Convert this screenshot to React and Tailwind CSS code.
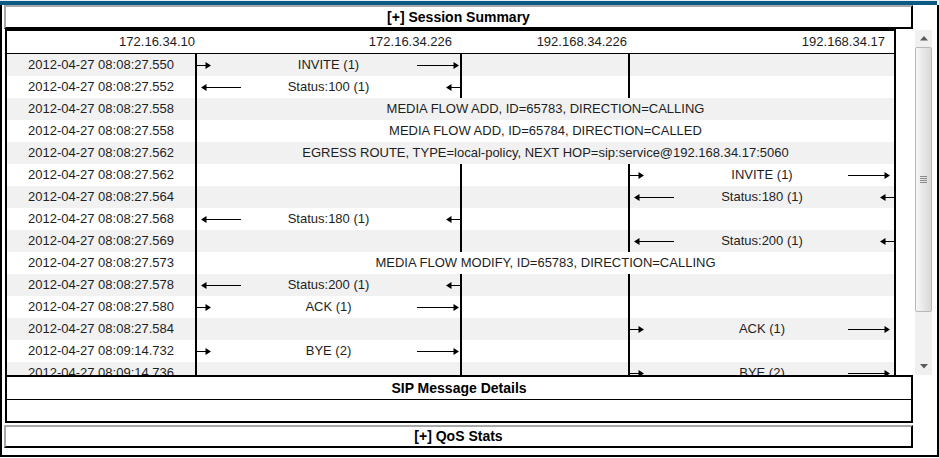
import React from 'react'

const rows = [
  { t: '2012-04-27 08:08:27.550', col: 'a', dir: 'r', label: 'INVITE (1)' },
  { t: '2012-04-27 08:08:27.552', col: 'a', dir: 'l', label: 'Status:100 (1)' },
  { t: '2012-04-27 08:08:27.558', span: 'MEDIA FLOW ADD, ID=65783, DIRECTION=CALLING' },
  { t: '2012-04-27 08:08:27.558', span: 'MEDIA FLOW ADD, ID=65784, DIRECTION=CALLED' },
  { t: '2012-04-27 08:08:27.562', span: 'EGRESS ROUTE, TYPE=local-policy, NEXT HOP=sip:service@192.168.34.17:5060' },
  { t: '2012-04-27 08:08:27.562', col: 'c', dir: 'r', label: 'INVITE (1)' },
  { t: '2012-04-27 08:08:27.564', col: 'c', dir: 'l', label: 'Status:180 (1)' },
  { t: '2012-04-27 08:08:27.568', col: 'a', dir: 'l', label: 'Status:180 (1)' },
  { t: '2012-04-27 08:08:27.569', col: 'c', dir: 'l', label: 'Status:200 (1)' },
  { t: '2012-04-27 08:08:27.573', span: 'MEDIA FLOW MODIFY, ID=65783, DIRECTION=CALLING' },
  { t: '2012-04-27 08:08:27.578', col: 'a', dir: 'l', label: 'Status:200 (1)' },
  { t: '2012-04-27 08:08:27.580', col: 'a', dir: 'r', label: 'ACK (1)' },
  { t: '2012-04-27 08:08:27.584', col: 'c', dir: 'r', label: 'ACK (1)' },
  { t: '2012-04-27 08:09:14.732', col: 'a', dir: 'r', label: 'BYE (2)' },
  { t: '2012-04-27 08:09:14.736', col: 'c', dir: 'r', label: 'BYE (2)' },
]

// arrow pieces, like the old ladder images
const RightStub = () => (
  <svg width="14" height="9" className="block">
    <rect x="0" y="4" width="10" height="1" fill="#000" />
    <polygon points="8.5,1 14,4.5 8.5,8" fill="#000" />
  </svg>
)

const RightLong = () => (
  <svg width="42" height="9" className="block">
    <rect x="0" y="4" width="38" height="1" fill="#000" />
    <polygon points="36.5,1 42,4.5 36.5,8" fill="#000" />
  </svg>
)

const LeftLong = () => (
  <svg width="40" height="9" className="block ml-[4px]">
    <polygon points="5.5,1 0,4.5 5.5,8" fill="#000" />
    <rect x="4" y="4" width="36" height="1" fill="#000" />
  </svg>
)

const LeftStub = () => (
  <svg width="14" height="9" className="block">
    <polygon points="5.5,1 0,4.5 5.5,8" fill="#000" />
    <rect x="4" y="4" width="10" height="1" fill="#000" />
  </svg>
)

const ArrowCell = ({ dir, label, endPad }) => (
  <div className="flex h-full items-center">
    <div className="flex w-[48px]">{dir === 'r' ? <RightStub /> : <LeftLong />}</div>
    <div className="flex-1 text-center whitespace-nowrap">{label}</div>
    <div className={`flex w-[48px] justify-end ${dir === 'r' ? endPad : ''}`}>
      {dir === 'r' ? <RightLong /> : <LeftStub />}
    </div>
  </div>
)

const Line = () => <div className="w-[2px] self-stretch bg-black" />

const Row = ({ row, i }) => (
  <div className={`flex h-[22px] items-center ${i % 2 === 0 ? 'bg-[#f1f1f1]' : 'bg-white'}`}>
    <div className="w-[188px] text-center whitespace-nowrap">{row.t}</div>
    <Line />
    {row.span ? (
      <div className="flex-1 text-center whitespace-nowrap">{row.span}</div>
    ) : (
      <>
        <div className="h-full w-[263px]">
          {row.col === 'a' && <ArrowCell dir={row.dir} label={row.label} endPad="pr-[1px]" />}
        </div>
        <Line />
        <div className="h-full w-[166px]" />
        <Line />
        <div className="h-full flex-1">
          {row.col === 'c' && <ArrowCell dir={row.dir} label={row.label} endPad="pr-[4px]" />}
        </div>
      </>
    )}
  </div>
)

const Triangle = ({ down }) => (
  <svg width="8" height="5" className="block">
    <polygon points={down ? '0,0 8,0 4,4.5' : '4,0 8,4.5 0,4.5'} fill="#5a5a5a" />
  </svg>
)

const Scrollbar = () => (
  <div className="ml-[19px] mt-[1px] flex h-[345px] w-[17px] flex-col bg-[#f0f0f0]">
    <div className="flex h-[17px] items-center justify-center">
      <Triangle />
    </div>
    <div className="flex h-[265px] items-center justify-center rounded-[2px] border border-[#b8b8b8] bg-gradient-to-r from-[#f7f7f7] to-[#d8d8d8]">
      <div className="flex flex-col gap-[1px]">
        <div className="h-[1px] w-[7px] bg-[#8a8a8a]" />
        <div className="h-[1px] w-[7px] bg-[#8a8a8a]" />
        <div className="h-[1px] w-[7px] bg-[#8a8a8a]" />
        <div className="h-[1px] w-[7px] bg-[#8a8a8a]" />
      </div>
    </div>
    <div className="flex-1" />
    <div className="flex h-[17px] items-center justify-center">
      <Triangle down />
    </div>
  </div>
)

export default function App() {
  return (
    <div className="flex h-[458px] w-[939px] flex-col bg-white font-['Liberation_Sans',Arial,sans-serif] text-[13px] text-[#1e1e1e]">
      <div className="h-[1px] bg-[#e6edf2]" />
      <div className="mr-[2px] h-[4px] bg-[#0b5a86]" />
      <div className="flex h-[452px] flex-col border-x-2 border-b-2 border-black">
        <div className="ml-[2px] flex h-[24px] w-[909px] items-center justify-center border-2 border-t-[#a8a8a8] border-l-[#a8a8a8] border-r-black border-b-black text-[14px] font-bold text-black">
          [+] Session Summary
        </div>

        <div className="flex h-[346px]">
          <div className="ml-[3px] h-[346px] w-[891px] overflow-hidden border-x-2 border-t-2 border-black">
            <div className="flex h-[23px] items-center border-b border-black text-right whitespace-nowrap">
              <div className="w-[190px] pr-[2px]">172.16.34.10</div>
              <div className="w-[265px] pr-[10px]">172.16.34.226</div>
              <div className="w-[168px] pr-[3px]">192.168.34.226</div>
              <div className="w-[264px] pr-[9px]">192.168.34.17</div>
            </div>
            {rows.map((row, i) => (
              <Row key={i} row={row} i={i} />
            ))}
          </div>
          <Scrollbar />
        </div>

        <div className="ml-[3px] flex h-[48px] w-[908px] flex-col border-2 border-black">
          <div className="flex h-[23px] items-center justify-center border-b border-black text-[14px] font-bold text-black">
            SIP Message Details
          </div>
          <div className="flex-1" />
        </div>

        <div className="ml-[2px] mt-[2px] flex h-[23px] w-[909px] items-center justify-center border-2 border-t-[#a8a8a8] border-l-[#a8a8a8] border-r-black border-b-black text-[14px] font-bold text-black">
          [+] QoS Stats
        </div>
      </div>
    </div>
  )
}
